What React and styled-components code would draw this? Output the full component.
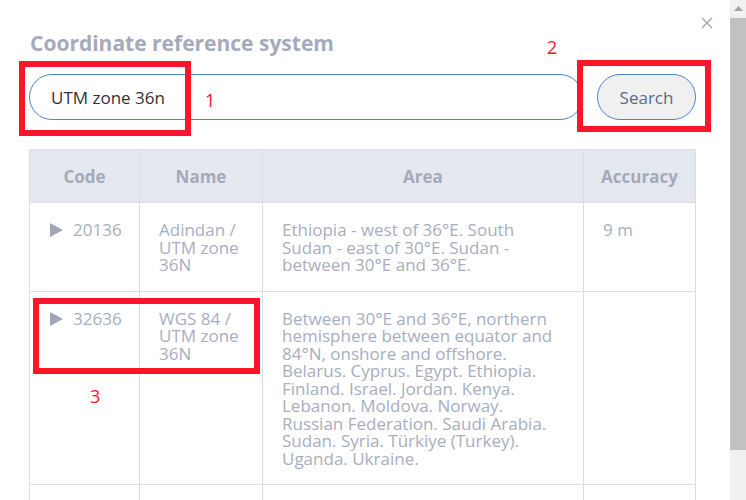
import React from 'react';
import styled, { createGlobalStyle } from 'styled-components';

const GlobalStyle = createGlobalStyle`
    body {
        margin: 0;
        background: #fff;
        font-family: "Open Sans", "Liberation Sans", sans-serif;
    }
`;

const Page = styled.div`
    display: flex;
    height: 500px;
    overflow: hidden;
`;

const Dialog = styled.div`
    position: relative;
    flex: 1;
    padding: 29px 34px 0 29px;
`;

const CloseButton = styled.button`
    position: absolute;
    top: 15px;
    right: 15px;
    width: 16px;
    height: 16px;
    padding: 0;
    border: none;
    background: none;
    display: flex;
    align-items: center;
    justify-content: center;
`;

const Title = styled.h2`
    margin: 0 0 0 1px;
    font-size: 21px;
    font-weight: 700;
    line-height: 29px;
    color: #a5abba;
`;

const SearchRow = styled.div`
    display: flex;
    gap: 14px;
    margin-top: 16px;
`;

const SearchInput = styled.input`
    flex: 1;
    height: 46px;
    box-sizing: border-box;
    border: 1px solid #4a84c6;
    border-radius: 23px;
    padding: 0 21px;
    font-family: inherit;
    font-size: 17px;
    color: #333;
    outline: none;
`;

const SearchButton = styled.button`
    width: 99px;
    height: 46px;
    border: 1px solid #4a84c6;
    border-radius: 23px;
    background: #f0f0f1;
    font-family: inherit;
    font-size: 17px;
    color: #5c6b89;
`;

const Table = styled.table`
    width: 666px;
    margin-top: 29px;
    border-collapse: collapse;
    table-layout: fixed;
`;

const Th = styled.th`
    height: 52px;
    padding: 0 8px;
    background: #e6e8f0;
    border: 1px solid #d8dfe6;
    font-size: 17px;
    font-weight: 700;
    color: #a4aab9;
    text-align: center;
`;

const Td = styled.td`
    padding: 18px 19px 17px;
    border: 1px solid #d8dfe6;
    vertical-align: top;
    font-size: 17px;
    line-height: 17.5px;
    color: #a8aec0;
`;

const CodeCell = styled.div`
    display: flex;
    align-items: flex-start;
    gap: 10px;
    margin-left: 1px;
`;

const Caret = styled.svg`
    flex: none;
    margin-top: 2px;
`;

const Mark = styled.div`
    position: absolute;
    left: ${p => p.x}px;
    top: ${p => p.y}px;
    width: ${p => p.w}px;
    height: ${p => p.h}px;
    box-sizing: border-box;
    border: 6px solid #ff1529;
`;

const MarkLabel = styled.span`
    position: absolute;
    left: ${p => p.x}px;
    top: ${p => p.y}px;
    font-size: 18px;
    line-height: 20px;
    color: #ff1529;
`;

const Scrollbar = styled.div`
    width: 17px;
    display: flex;
    flex-direction: column;
    background: #f1f1f1;
`;

const ScrollArrow = styled.div`
    height: 17px;
    display: flex;
    align-items: center;
    justify-content: center;
`;

const ScrollThumb = styled.div`
    height: 432px;
    margin-top: 1px;
    background: #c1c1c1;
`;

const rows = [
    {
        code: '20136',
        name: 'Adindan / UTM zone 36N',
        area: 'Ethiopia - west of 36°E. South Sudan - east of 30°E. Sudan - between 30°E and 36°E.',
        accuracy: '9 m',
    },
    {
        code: '32636',
        name: 'WGS 84 / UTM zone 36N',
        area: 'Between 30°E and 36°E, northern hemisphere between equator and 84°N, onshore and offshore. Belarus. Cyprus. Egypt. Ethiopia. Finland. Israel. Jordan. Kenya. Lebanon. Moldova. Norway. Russian Federation. Saudi Arabia. Sudan. Syria. Türkiye (Turkey). Uganda. Ukraine.',
        accuracy: '',
    },
    { code: '', name: '', area: '', accuracy: '' },
];

export default function App() {
    return (
        <>
            <GlobalStyle />
            <Page>
                <Dialog>
                    <CloseButton aria-label="Close">
                        <svg width="12" height="12" viewBox="0 0 12 12">
                            <path d="M1 1L11 11M11 1L1 11" stroke="#a3a6ad" strokeWidth="1.4" />
                        </svg>
                    </CloseButton>
                    <Title>Coordinate reference system</Title>
                    <SearchRow>
                        <SearchInput defaultValue="UTM zone 36n" />
                        <SearchButton>Search</SearchButton>
                    </SearchRow>
                    <Table>
                        <colgroup>
                            <col style={{ width: 110 }} />
                            <col style={{ width: 123 }} />
                            <col style={{ width: 321 }} />
                            <col style={{ width: 112 }} />
                        </colgroup>
                        <thead>
                            <tr>
                                <Th>Code</Th>
                                <Th>Name</Th>
                                <Th>Area</Th>
                                <Th>Accuracy</Th>
                            </tr>
                        </thead>
                        <tbody>
                            {rows.map((row, i) => (
                                <tr key={i}>
                                    <Td>
                                        {row.code && (
                                            <CodeCell>
                                                <Caret width="13" height="14" viewBox="0 0 13 14">
                                                    <path d="M0 0L13 7L0 14Z" fill="#a0a6b8" />
                                                </Caret>
                                                {row.code}
                                            </CodeCell>
                                        )}
                                    </Td>
                                    <Td>{row.name}</Td>
                                    <Td>{row.area}</Td>
                                    <Td>{row.accuracy}</Td>
                                </tr>
                            ))}
                        </tbody>
                    </Table>

                    <Mark x={19} y={61} w={172} h={75} />
                    <MarkLabel x={205} y={90}>1</MarkLabel>
                    <Mark x={577} y={60} w={134} h={72} />
                    <MarkLabel x={547} y={37}>2</MarkLabel>
                    <Mark x={33} y={298} w={227} h={76} />
                    <MarkLabel x={90} y={386}>3</MarkLabel>
                </Dialog>
                <Scrollbar>
                    <ScrollArrow>
                        <svg width="9" height="5" viewBox="0 0 9 5">
                            <path d="M0 5L4.5 0L9 5Z" fill="#a3a3a3" />
                        </svg>
                    </ScrollArrow>
                    <ScrollThumb />
                </Scrollbar>
            </Page>
        </>
    );
}
